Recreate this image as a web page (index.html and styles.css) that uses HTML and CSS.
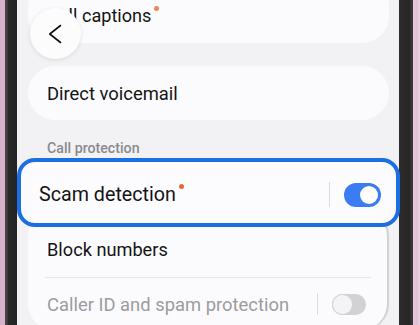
FILE: index.html
```html
<!DOCTYPE html>
<html>
<head>
<meta charset="utf-8">
<link rel="stylesheet" href="styles.css">
</head>
<body>
<div class="device">
  <div class="pink-left"></div>
  <div class="bezel-left"></div>
  <div class="screen">
    <div class="card card-top">
      <span class="label label-cc">Call captions<span class="dot dot-soft"></span></span>
    </div>
    <div class="card card-pill">
      <span class="label">Direct voicemail</span>
    </div>
    <div class="section-title">Call protection</div>
    <div class="highlight">
      <span class="label label-big">Scam detection<span class="dot"></span></span>
      <div class="controls">
        <span class="vdivider"></span>
        <span class="toggle on"><span class="knob"></span></span>
      </div>
    </div>
    <div class="card card-bottom">
      <div class="row row-first">
        <span class="label label-bn">Block numbers</span>
      </div>
      <div class="hline"></div>
      <div class="row row-second">
        <span class="label muted">Caller ID and spam protection</span>
        <div class="controls">
          <span class="vdivider vdivider-sm"></span>
          <span class="toggle off"><span class="knob"></span></span>
        </div>
      </div>
    </div>
    <button class="back" aria-label="Back">
      <svg width="14" height="22" viewBox="0 0 14 22"><path d="M12.5 2.5 L1.8 11 L12.5 19.5" fill="none" stroke="#111" stroke-width="1.6" stroke-linecap="round" stroke-linejoin="round"/></svg>
    </button>
  </div>
  <div class="bezel-right"></div>
  <div class="pink-right"></div>
</div>
</body>
</html>
```
FILE: styles.css
```css
html, body {
  margin: 0;
  padding: 0;
  width: 420px;
  height: 325px;
  overflow: hidden;
  font-family: Roboto, "Noto Sans", sans-serif;
}
.device {
  display: flex;
  width: 420px;
  height: 325px;
}
.pink-left {
  width: 5px;
  background: #d7b2ca;
}
.bezel-left {
  width: 12px;
  background: linear-gradient(to right, #454545 0, #454545 2px, #2a2a2a 3px, #242424 100%);
}
.bezel-right {
  width: 14px;
  background: linear-gradient(to right, #2c2c2c 0, #262626 70%, #3a3a3a 100%);
}
.pink-right {
  width: 7px;
  background: linear-gradient(to right, #e9cbdd 0, #dfbdd2 50%, #ecd3e2 100%);
}
.screen {
  position: relative;
  width: 382px;
  height: 325px;
  background: #f2f2f4;
  display: flex;
  flex-direction: column;
}
.screen > * {
  flex-shrink: 0;
}
.card {
  background: #fbfbfd;
  margin: 0 10px 0 11px;
  box-sizing: border-box;
}
.card-top {
  margin-top: -20px;
  height: 63px;
  padding: 25px 0 0 19px;
  border-radius: 27px;
}
.card-pill {
  margin-top: 23px;
  height: 54px;
  border-radius: 27px;
  display: flex;
  align-items: center;
  padding-left: 19px;
}
.label {
  font-size: 18.4px;
  color: #141414;
  position: relative;
  white-space: nowrap;
}
.label-cc {
  font-size: 18.1px;
}
.label-big {
  font-size: 19.7px;
}
.label-bn {
  font-size: 18.2px;
}
.muted {
  color: #9c9c9e;
}
.dot {
  position: absolute;
  right: -8.5px;
  top: 0.5px;
  width: 5px;
  height: 5px;
  border-radius: 50%;
  background: #e4692f;
}
.dot-soft {
  background: #ec8752;
  top: 0.5px;
  right: -7.5px;
}
.section-title {
  margin: 19px 0 0 30px;
  height: 18px;
  line-height: 18px;
  font-size: 14.2px;
  font-weight: 500;
  color: #8a8a8c;
}
.highlight {
  position: relative;
  z-index: 1;
  margin: 1px -1px 0 0;
  height: 69px;
  box-sizing: border-box;
  border: 4px solid #1b6fe3;
  border-radius: 18px;
  background: #fcfcfe;
  display: flex;
  align-items: center;
  justify-content: space-between;
  padding: 4px 15px 0 18px;
}
.controls {
  display: flex;
  align-items: center;
  gap: 14px;
}
.vdivider {
  width: 1px;
  height: 25px;
  background: #dcdcde;
}
.vdivider-sm {
  height: 22px;
}
.toggle {
  position: relative;
  display: block;
  box-sizing: border-box;
  width: 37px;
  height: 24px;
  border-radius: 12px;
}
.toggle.on {
  background: #3c7cf2;
}
.toggle.on .knob {
  position: absolute;
  right: 3px;
  top: 3px;
  width: 18px;
  height: 18px;
  border-radius: 50%;
  background: #ffffff;
}
.toggle.off {
  width: 34px;
  height: 21px;
  background: #d2d2d4;
  border-radius: 11px;
}
.toggle.off .knob {
  position: absolute;
  left: 0;
  top: 0;
  width: 21px;
  height: 21px;
  box-sizing: border-box;
  border-radius: 50%;
  background: #f4f4f6;
  border: 1.5px solid #d2d2d4;
}
.card-bottom {
  margin: -17px 12px 0 11px;
  padding-top: 12px;
  border-radius: 26px;
  height: 120px;
  box-shadow: 2px 0 1px rgba(0, 0, 0, 0.14);
}
.row {
  display: flex;
  align-items: center;
  justify-content: space-between;
  padding: 0 21px 0 19px;
}
.row-first {
  height: 55px;
}
.row-second {
  height: 52px;
}
.hline {
  height: 1px;
  margin: 0 16px 0 17px;
  background: #e6e6e8;
}
.back {
  position: absolute;
  left: 13px;
  top: 8px;
  width: 51px;
  height: 51px;
  border-radius: 50%;
  border: none;
  padding: 0;
  background: #fcfcfd;
  box-shadow: 0 1px 4px rgba(0, 0, 0, 0.10);
  display: flex;
  align-items: center;
  justify-content: center;
}
.back svg {
  margin-left: -2px;
}
```
